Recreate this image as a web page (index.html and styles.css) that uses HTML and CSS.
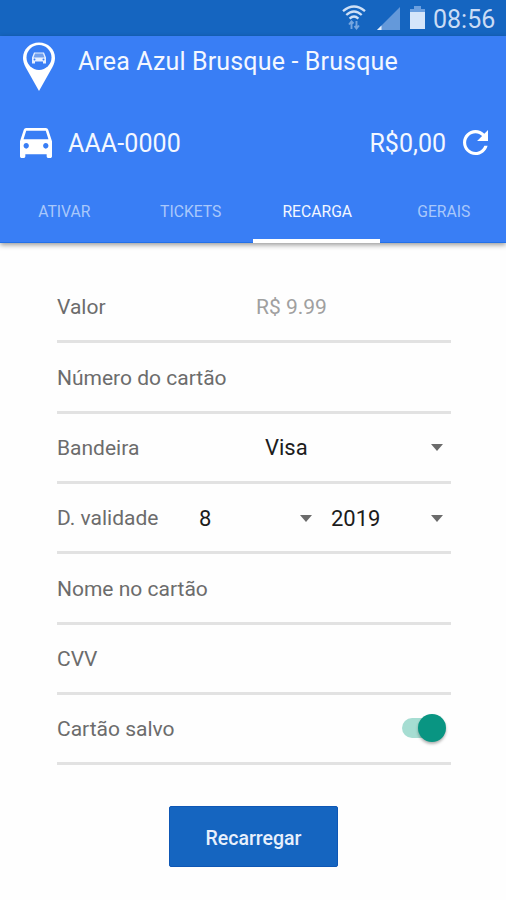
FILE: index.html
```html
<!DOCTYPE html>
<html lang="pt-BR">
<head>
<meta charset="utf-8">
<title>Area Azul Brusque</title>
<link rel="stylesheet" href="styles.css">
</head>
<body>
<div class="status">
  <svg class="wifi" width="24" height="26" viewBox="0 0 24 26" fill="none" stroke="#cfe0f6" stroke-width="2.3">
    <path d="M1 6.2Q12-3.2 23 6.2M4.3 10Q12 3 19.700 10M7.600 13.600Q12 9.400 16.400 13.600"/>
    <path d="M9.500 24v-7M7 19.500l2.500-3 2 2M14.500 16v7M12.500 21l2 2.500 2.500-3" stroke="#76a6df" stroke-width="1.900"/>
  </svg>
  <svg class="signal" width="23" height="23" viewBox="0 0 23 23">
    <path d="M23 0v23H0z" fill="#6499da"/><path d="M4.500 18.500V23H0z" fill="#e5effb"/>
  </svg>
  <svg class="battery" width="15" height="23" viewBox="0 0 15 23">
    <path d="M4 0h7v3h4v4H0V3h4z" fill="#6b9fdf"/><path d="M0 6h15v17H0z" fill="#d5e5fa"/>
  </svg>
  <span class="clock">08:56</span>
</div>
<header class="header">
  <div class="brand">
    <svg class="pin" width="34" height="50" viewBox="0 0 34 50">
      <path d="M17 0.500C8 .5 1 7 1 16c0 3 1 6 2.500 9L17 49l13.500-24C32 22 33 19 33 16 33 7 26 .5 17 .5z" fill="#fff"/>
      <circle cx="17" cy="15.500" r="12.500" fill="#397ef5"/>
      <path d="M12 10.500h10l2 5v6h-3v-2h-8v2h-3v-6z" fill="#e7f0ff"/>
      <path d="M13 11.500h8l1.500 4h-11z" fill="#719fed"/>
      <circle cx="12.500" cy="17.500" r="1" fill="#397ef5"/><circle cx="21.500" cy="17.500" r="1" fill="#397ef5"/>
    </svg>
    <h1 class="title">Area Azul Brusque - Brusque</h1>
  </div>
  <div class="account">
    <svg class="car" width="32" height="30" viewBox="3 4 18 16" preserveAspectRatio="none" fill="#fff">
      <path d="M18.920 5.010C18.720 4.420 18.160 4 17.500 4h-11c-.66 0-1.210.42-1.420 1.010L3 11v8c0 .55.45 1 1 1h1c.55 0 1-.45 1-1v-1h12v1c0 .55.45 1 1 1h1c.55 0 1-.45 1-1v-8l-2.080-5.990zM6.500 15c-.83 0-1.500-.67-1.500-1.500S5.670 12 6.500 12s1.500.67 1.500 1.500S7.330 15 6.500 15zm11 0c-.83 0-1.500-.67-1.500-1.500s.67-1.500 1.500-1.500 1.500.67 1.500 1.500-.67 1.500-1.500 1.500zM5 10l1.500-4.500h11L19 10H5z"/>
    </svg>
    <span class="plate">AAA-0000</span>
    <span class="balance">R$0,00</span>
    <svg class="refresh" width="25" height="25" viewBox="4 4 16 16" fill="#fff">
      <path d="M17.650 6.350C16.200 4.900 14.210 4 12 4c-4.420 0-7.990 3.580-7.990 8s3.570 8 7.990 8c3.730 0 6.840-2.550 7.730-6h-2.080c-.82 2.330-3.040 4-5.650 4-3.310 0-6-2.690-6-6s2.690-6 6-6c1.660 0 3.140.69 4.220 1.780L13 11h7V4l-2.350 2.350z"/>
    </svg>
  </div>
  <nav class="tabs">
    <span class="tab">ATIVAR</span>
    <span class="tab">TICKETS</span>
    <span class="tab active">RECARGA</span>
    <span class="tab">GERAIS</span>
  </nav>
</header>
<main class="form">
  <div class="row"><span class="label">Valor</span><span class="hint">R$ 9.99</span></div>
  <div class="row"><span class="label wide">Número do cartão</span></div>
  <div class="row"><span class="label">Bandeira</span><span class="select brand-select">Visa<i class="arrow"></i></span></div>
  <div class="row"><span class="label">D. validade</span><span class="select month">8<i class="arrow"></i></span><span class="select year">2019<i class="arrow"></i></span></div>
  <div class="row"><span class="label wide">Nome no cartão</span></div>
  <div class="row"><span class="label">CVV</span></div>
  <div class="row"><span class="label">Cartão salvo</span><span class="switch"><i class="knob"></i></span></div>
  <button class="submit">Recarregar</button>
</main>
</body>
</html>
```
FILE: styles.css
```css
* { box-sizing: border-box; }
body {
  margin: 0;
  height: 900px;
  overflow: hidden;
  background: #fefefe;
  font-family: Roboto, sans-serif;
}
svg { display: block; flex: none; }
.status {
  height: 36px;
  background: #1565c0;
  display: flex;
  align-items: flex-start;
  padding: 5px 11px 0 0;
  justify-content: flex-end;
}
.wifi { margin-right: 1px; }
.signal { margin: 2px 0 0 10px; }
.battery { margin: 1px 0 0 10px; }
.clock {
  width: 62px;
  margin-left: 8px;
  font-size: 25px;
  line-height: 30px;
  color: #cadcf5;
  white-space: nowrap;
}
.header {
  height: 207px;
  background: #397ef5;
  color: #f3f7ff;
  box-shadow: 0 2px 5px rgba(0, 0, 0, .4);
}
.brand { display: flex; height: 70px; padding: 6px 0 0 22px; }
.title {
  margin: 5px 0 0 22px;
  font-size: 25px;
  line-height: 30px;
  font-weight: 400;
  letter-spacing: .15px;
  white-space: nowrap;
}
.account {
  display: flex;
  align-items: center;
  height: 74px;
  padding: 0 18px 0 20px;
  font-size: 25px;
}
.plate { margin-left: 16px; letter-spacing: .1px; }
.balance { margin-left: auto; }
.refresh { margin: -2px 0 0 17px; }
.tabs { display: grid; grid-template: 63px / repeat(4, 1fr); }
.tab {
  text-align: center;
  font-size: 15.700px;
  line-height: 63px;
  padding-left: 2px;
  color: #a9c8fb;
  border-bottom: 1px solid #2370e8;
}
.tab.active { color: #f3f7ff; border-bottom: 4px solid #fff; }
.form { padding: 30px 55px 0 57px; display: flex; flex-direction: column; }
.row {
  height: 70.35px;
  padding-top: 1px;
  border-bottom: 3px solid #e2e2e2;
  display: flex;
  align-items: center;
  color: #6c6c6c;
  font-size: 21px;
}
.label { width: 142px; white-space: nowrap; }
.label.wide { width: auto; }
.hint { margin-left: 57px; color: #a0a0a0; }
.select {
  display: flex;
  align-items: center;
  justify-content: space-between;
  color: #1c1c1c;
  font-size: 22px;
}
.brand-select { margin-left: 66px; width: 178px; }
.month { width: 113px; }
.year { margin-left: 19px; width: 112px; }
.arrow {
  border: 6.500px solid transparent;
  border-top: 7px solid #6b6b6b;
  border-bottom: 0;
}
.switch {
  width: 44px;
  height: 20px;
  margin-left: auto;
  margin-right: 5px;
  border-radius: 10px;
  background: linear-gradient(90deg, #a6ddd2 32px, transparent 32px);
  display: flex;
  align-items: center;
  justify-content: flex-end;
}
.row:last-of-type .switch { margin-top: -2px; }
.knob {
  width: 28px;
  height: 28px;
  flex: none;
  border-radius: 50%;
  background: #099582;
  box-shadow: 0 2px 3px rgba(0, 0, 0, .3);
}
.submit {
  width: 169px;
  height: 61px;
  margin: 41px 0 0 112px;
  padding: 3px 0 0;
  border: 1px solid #0e57b5;
  border-radius: 2px;
  background: #1565c0;
  color: #e8f0fc;
  font: 500 19.500px Roboto, sans-serif;
}
```
